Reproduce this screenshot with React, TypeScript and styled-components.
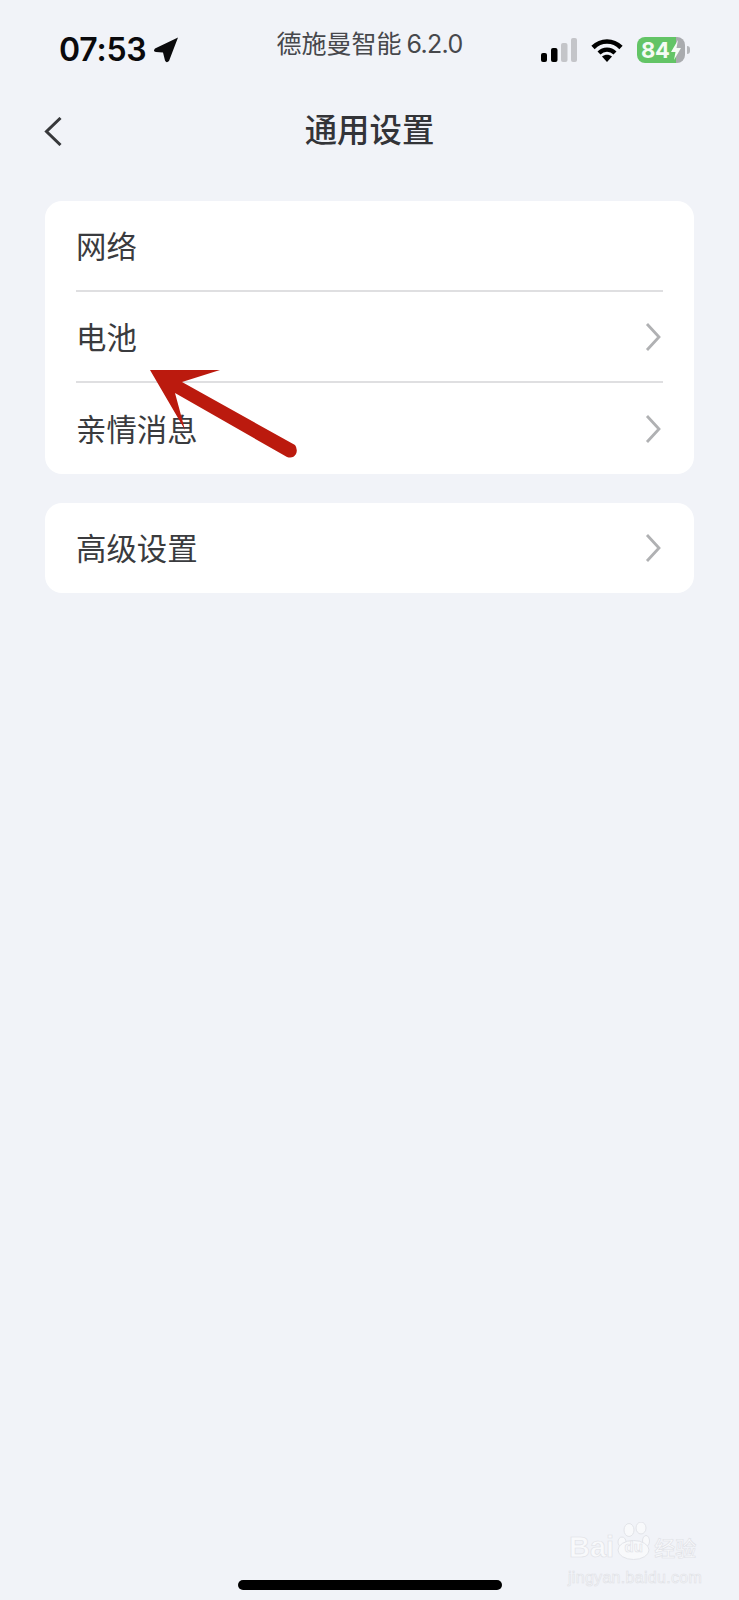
import React from 'react';
import styled, { createGlobalStyle } from 'styled-components';

const GlobalStyle = createGlobalStyle`
  html, body {
    margin: 0;
    padding: 0;
    background: #f1f3f8;
  }
  * { box-sizing: border-box; }
`;

const Page = styled.div`
  position: relative;
  width: 739px;
  height: 1600px;
  overflow: hidden;
  background: #f1f3f8;
  font-family: "Noto Sans CJK SC", "Noto Sans", sans-serif;
  color: #333438;
`;

const StatusBar = styled.div`
  display: grid;
  grid-template-columns: 1fr auto 1fr;
  align-items: flex-start;
  height: 100px;
  padding: 33px 59px 0;
`;

const Clock = styled.div`
  display: flex;
  align-items: center;
  gap: 6px;
  font-family: Inter, sans-serif;
  font-size: 32px;
  font-weight: 600;
  line-height: 34px;
  letter-spacing: -0.2px;
  color: #0a0a0c;
`;

const AppName = styled.div`
  font-size: 25px;
  line-height: 30px;
  margin-top: -6px;
  color: #47484c;

  span {
    font-family: Inter, sans-serif;
    letter-spacing: -0.7px;
    margin-left: 5px;
  }
`;

const StatusIcons = styled.div`
  display: flex;
  justify-content: flex-end;
  align-items: center;
  height: 34px;
  gap: 14px;
  margin-right: -5px;
`;

const Battery = styled.div`
  position: relative;
  display: flex;
  align-items: center;
  width: 48px;
  height: 26px;
  padding-left: 4px;
  border-radius: 8px;
  background: linear-gradient(90deg, #63c466 0 82%, #a9abae 82% 100%);
  font-family: Inter, sans-serif;
  font-size: 22px;
  font-weight: 700;
  letter-spacing: -0.3px;
  color: #f4fbf4;

  &::after {
    content: '';
    position: absolute;
    right: -5px;
    top: 9px;
    width: 3px;
    height: 8px;
    border-radius: 0 3px 3px 0;
    background: #b5b7ba;
  }
`;

const NavBar = styled.div`
  display: flex;
  align-items: center;
  justify-content: center;
  position: relative;
  height: 62px;
  padding-bottom: 6px;
`;

const BackButton = styled.div`
  position: absolute;
  left: 44px;
  top: 17px;
  display: flex;
`;

const Title = styled.div`
  font-size: 32.4px;
  font-weight: 500;
  line-height: 40px;
  color: #333438;
`;

const Content = styled.div`
  display: flex;
  flex-direction: column;
  gap: 29px;
  padding: 39px 45px 0;
`;

const Card = styled.div`
  display: flex;
  flex-direction: column;
  background: #fff;
  border-radius: 17px;
  padding: 0 31px;
`;

const Row = styled.div<{ $divider?: boolean }>`
  display: flex;
  align-items: center;
  justify-content: space-between;
  height: 91px;
  border-bottom: ${({ $divider }) => ($divider ? '2px solid #dfdfe1' : 'none')};
  font-size: 30.4px;
  line-height: 40px;
  color: #3a3b3e;
`;

const SingleRow = styled(Row)`
  height: 90px;
`;

const Label = styled.span`
  margin-bottom: 2px;
`;

const ChevronIcon = styled.svg`
  margin-right: 2px;
`;

const Arrow = styled.svg`
  position: absolute;
  left: 0;
  top: 0;
  pointer-events: none;
`;

const HomeIndicator = styled.div`
  position: absolute;
  left: 238px;
  bottom: 10px;
  width: 264px;
  height: 10px;
  border-radius: 5px;
  background: #000;
`;

const Watermark = styled.div`
  position: absolute;
  left: 567px;
  top: 1522px;
  width: 140px;
  color: #f8f9fb;
  -webkit-text-stroke: 0.6px #dfe1e6;
`;

const MarkTop = styled.div`
  display: flex;
  align-items: flex-end;
  height: 38px;
  padding-left: 2px;
  font-family: "Liberation Sans", sans-serif;
  font-size: 29px;
  font-weight: 700;
  line-height: 26px;
`;

const MarkPaw = styled.span`
  position: relative;
  display: flex;
  justify-content: center;
  width: 33px;
  margin-left: 3px;
  font-size: 15px;

  svg {
    position: absolute;
    left: 0;
    bottom: 0;
  }

  b {
    position: relative;
  }
`;

const MarkCn = styled.span`
  font-family: "Noto Sans CJK SC", sans-serif;
  font-size: 21px;
  font-weight: 500;
  line-height: 26px;
  margin-left: 4px;
`;

const MarkUrl = styled.div`
  font-family: "Liberation Sans", sans-serif;
  font-size: 16px;
  line-height: 18px;
  margin-top: 9px;
  padding-left: 1px;
  letter-spacing: 0.3px;
  white-space: nowrap;
`;

const Chevron = () => (
  <ChevronIcon width="16" height="28" viewBox="0 0 16 28" fill="none">
    <path d="M2 1 L14 14 L2 27" stroke="#b0b1b3" strokeWidth="2.8" />
  </ChevronIcon>
);

const App: React.FC = () => (
  <Page>
    <GlobalStyle />
    <StatusBar>
      <Clock>
        07:53
        <svg width="26" height="26" viewBox="0 0 26 26">
          <path
            d="M25 0.5 L2 11.5 Q-0.5 14.5 3 15 L10 15.5 L12 23.5 Q13.5 26.5 16 24 Z"
            fill="#0a0a0c"
          />
        </svg>
      </Clock>
      <AppName>
        德施曼智能<span>6.2.0</span>
      </AppName>
      <StatusIcons>
        <svg width="36" height="24" viewBox="0 0 36 24">
          <rect x="0" y="15" width="6" height="9" rx="2" fill="#000" />
          <rect x="10" y="10" width="6.5" height="14" rx="2" fill="#000" />
          <rect x="20" y="5" width="6.5" height="19" rx="2" fill="#c4c5c9" />
          <rect x="30" y="0" width="6" height="24" rx="2" fill="#c4c5c9" />
        </svg>
        <svg width="32" height="24" viewBox="0 0 32 24" fill="none">
          <path d="M2 9.5 C10 1.5 22 1.5 30 9.5" stroke="#000" strokeWidth="4.6" />
          <path d="M8 15 C12.5 10.5 19.5 10.5 24 15" stroke="#000" strokeWidth="4.2" />
          <path d="M11 18.5 C14 16 18 16 21 18.5 L16 24 Z" fill="#000" />
        </svg>
        <Battery>
          84
          <svg width="12" height="22" viewBox="0 0 12 22">
            <path d="M8 1 L1 13 H5.5 L4 21 L11 9 H6.5 Z" fill="#f4fbf4" />
          </svg>
        </Battery>
      </StatusIcons>
    </StatusBar>

    <NavBar>
      <BackButton>
        <svg width="18" height="29" viewBox="0 0 18 29" fill="none">
          <path d="M16.5 1 L2.5 14.5 L16.5 28" stroke="#37383b" strokeWidth="3" />
        </svg>
      </BackButton>
      <Title>通用设置</Title>
    </NavBar>

    <Content>
      <Card>
        <Row $divider>
          <Label>网络</Label>
        </Row>
        <Row $divider>
          <Label>电池</Label>
          <Chevron />
        </Row>
        <Row>
          <Label>亲情消息</Label>
          <Chevron />
        </Row>
      </Card>
      <Card>
        <SingleRow>
          <Label>高级设置</Label>
          <Chevron />
        </SingleRow>
      </Card>
    </Content>

    <Arrow width="739" height="1600" viewBox="0 0 739 1600">
      <path
        d="M150 370 L220 370 L182 382 L295 445 Q298 449 296 454 Q293 459 287 457 L175 393 L185 430 Z"
        fill="#bb1a0e"
      />
    </Arrow>

    <Watermark>
      <MarkTop>
        Bai
        <MarkPaw>
          <svg width="33" height="38" viewBox="0 0 33 38" fill="#f8f9fb" stroke="#e2e4e9" strokeWidth="1">
            <ellipse cx="5" cy="20" rx="4" ry="5" />
            <ellipse cx="12" cy="8" rx="5" ry="6.5" />
            <ellipse cx="24" cy="6" rx="5" ry="6" />
            <ellipse cx="29" cy="19" rx="3.5" ry="5.5" />
            <ellipse cx="16.5" cy="28" rx="15.5" ry="9.5" />
          </svg>
          <b>du</b>
        </MarkPaw>
        <MarkCn>经验</MarkCn>
      </MarkTop>
      <MarkUrl>jingyan.baidu.com</MarkUrl>
    </Watermark>

    <HomeIndicator />
  </Page>
);

export default App;
